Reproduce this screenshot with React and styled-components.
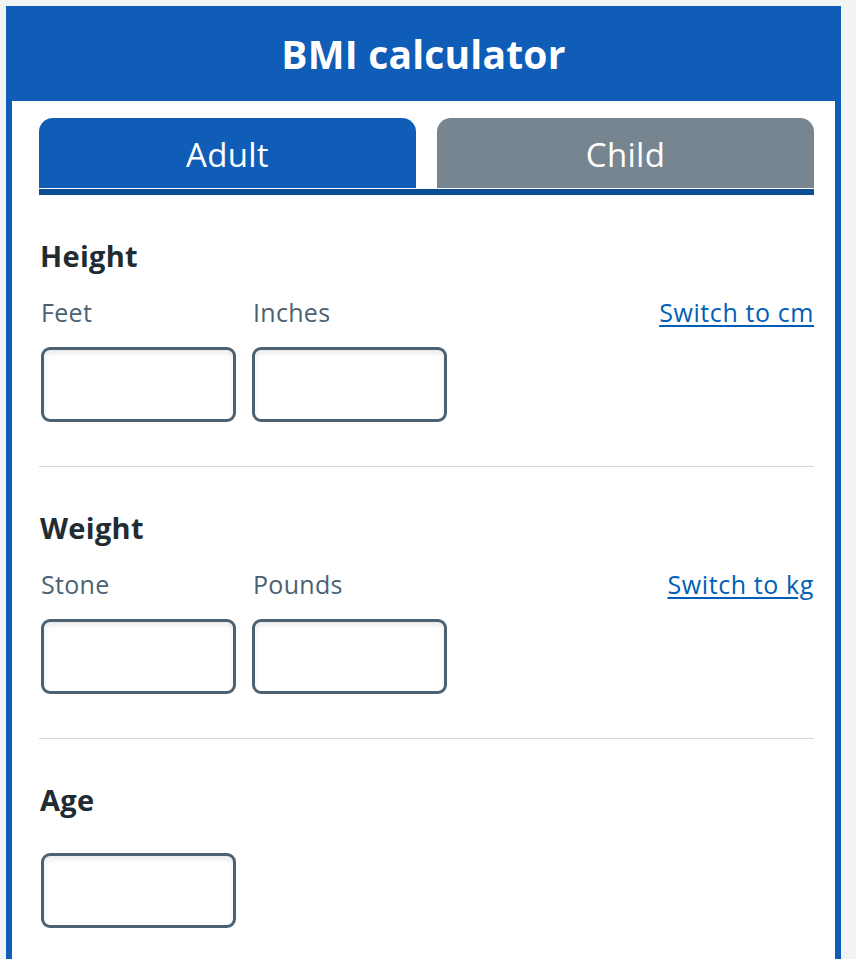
import React from "react";
import styled, { createGlobalStyle } from "styled-components";

const GlobalStyle = createGlobalStyle`
  html, body {
    margin: 0;
    padding: 0;
    background: #f0f4f5;
  }
  body {
    font-family: "Open Sans", "Noto Sans", sans-serif;
    color: #212b32;
  }
`;

const Page = styled.div`
  padding: 6px 15px 0 6px;
  height: 953px;
  overflow: hidden;
`;

const Panel = styled.div`
  width: 835px;
  box-sizing: border-box;
  background: #fff;
  border-left: 6px solid #0f5db7;
  border-right: 6px solid #0f5db7;
  min-height: 960px;
`;

const Header = styled.h1`
  margin: 0 -6px;
  height: 95px;
  background: #0f5db7;
  color: #fff;
  display: flex;
  align-items: center;
  justify-content: center;
  font-size: 39px;
  font-weight: 700;
  letter-spacing: 0.2px;
`;

const Body = styled.div`
  padding: 17px 21px 0 27px;
`;

const TabBar = styled.div`
  display: grid;
  grid-template-columns: 1fr 1fr;
  column-gap: 21px;
  border-bottom: 6px solid #0b4e96;
`;

const Tab = styled.button`
  height: 70px;
  margin-bottom: 1px;
  padding-top: 4px;
  border: none;
  border-radius: 14px 14px 0 0;
  background: ${(p) => (p.$active ? "#0f5db7" : "#778591")};
  color: #fff;
  font-family: inherit;
  font-size: 33px;
  font-weight: 400;
  letter-spacing: 0.3px;
  cursor: pointer;
`;

const Section = styled.section`
  padding: 42px 0 44px;
  border-bottom: ${(p) => (p.$last ? "none" : "1px solid #d3d9dc")};
`;

const Legend = styled.h2`
  margin: 0 0 0 1px;
  font-size: 29px;
  font-weight: 700;
  line-height: 38px;
  letter-spacing: 0.3px;
  color: #212b32;
`;

const LabelRow = styled.div`
  display: flex;
  align-items: baseline;
  margin-top: 20px;
`;

const FieldLabel = styled.label`
  width: 210px;
  padding-left: 2px;
  font-size: 25px;
  line-height: 34px;
  letter-spacing: 0.3px;
  color: #4c6272;
`;

const SwitchLink = styled.a`
  margin-left: auto;
  font-size: 25px;
  line-height: 34px;
  letter-spacing: 0.6px;
  color: #005eb8;
  text-decoration: underline;
  text-underline-offset: 3px;
  text-decoration-thickness: 2px;
  cursor: pointer;
`;

const InputRow = styled.div`
  display: flex;
  gap: 16px;
  margin-top: ${(p) => p.$gap || 18}px;
  padding-left: 2px;
`;

const Input = styled.input`
  width: 195px;
  height: 75px;
  box-sizing: border-box;
  border: 3px solid #4c6272;
  border-radius: 9px;
  background: #fff;
  box-shadow: inset 0 4px 5px rgba(0, 0, 0, 0.07);
  font-size: 24px;
  padding: 0 12px;
  outline: none;
`;

const Measure = ({ title, left, right, link }) => (
  <Section>
    <Legend>{title}</Legend>
    <LabelRow>
      <FieldLabel>{left}</FieldLabel>
      <FieldLabel>{right}</FieldLabel>
      <SwitchLink>{link}</SwitchLink>
    </LabelRow>
    <InputRow>
      <Input type="text" inputMode="numeric" aria-label={left} />
      <Input type="text" inputMode="numeric" aria-label={right} />
    </InputRow>
  </Section>
);

export default function App() {
  return (
    <>
      <GlobalStyle />
      <Page>
        <Panel>
          <Header>BMI calculator</Header>
          <Body>
            <TabBar>
              <Tab $active>Adult</Tab>
              <Tab>Child</Tab>
            </TabBar>
            <Measure title="Height" left="Feet" right="Inches" link="Switch to cm" />
            <Measure title="Weight" left="Stone" right="Pounds" link="Switch to kg" />
            <Section $last>
              <Legend>Age</Legend>
              <InputRow $gap={34}>
                <Input type="text" inputMode="numeric" aria-label="Age" />
              </InputRow>
            </Section>
          </Body>
        </Panel>
      </Page>
    </>
  );
}
